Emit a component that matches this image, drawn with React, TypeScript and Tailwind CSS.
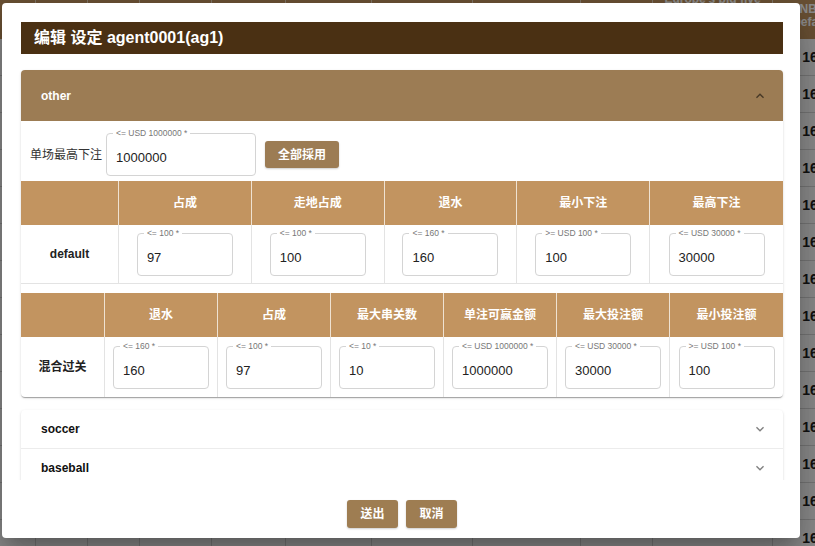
import React from "react";

const Chevron = ({ className }: { className?: string }) => (
  <svg viewBox="0 0 24 24" className={className} fill="currentColor">
    <path d="M16.59 8.59 12 13.17 7.41 8.59 6 10l6 6 6-6z" />
  </svg>
);

function Field({ label, value, w }: { label: string; value: string; w: string }) {
  return (
    <div className={`relative h-[43px] rounded-[4px] border border-[#d4d4d4] bg-white ${w}`}>
      <span className="absolute left-[6px] -top-[6px] whitespace-nowrap bg-white px-[3px] text-[8.5px] leading-[10px] text-[#777]">
        {label}
      </span>
      <div className="pl-[9px] pt-[16px] text-[13px] leading-[15px] text-[#222]">{value}</div>
    </div>
  );
}

const bgColClasses = [
  "w-[36px]",
  "w-[52px]",
  "w-[52px]",
  "w-[72px]",
  "w-[74px]",
  "w-[86px]",
  "w-[101px]",
  "w-[108px]",
  "w-[72px]",
  "w-[120px]",
  "w-[80px]",
];

function Background() {
  const rows = Array.from({ length: 14 });
  return (
    <div className="flex flex-col">
      <div className="flex h-[39px] bg-[#c29460]">
        {bgColClasses.map((c, i) => (
          <div
            key={i}
            className={`${c} shrink-0 border-r border-[#e6d3bb] flex flex-col items-center justify-start text-[12px] leading-[13px] font-bold text-white text-center`}
          >
            {i === 9 ? <span className="-mt-[7px]">Europe's big five</span> : null}
            {i === 10 ? (
              <span className="mt-[3px] w-[60px]">NBA Default</span>
            ) : null}
          </div>
        ))}
      </div>
      {rows.map((_, r) => (
        <div key={r} className="flex h-[37px] bg-white border-b border-[#d8d8d8]">
          {bgColClasses.map((c, i) => (
            <div
              key={i}
              className={`${c} shrink-0 border-r border-[#d8d8d8] flex items-center justify-center text-[14px] font-bold text-[#222]`}
            >
              {i === 10 ? <span className="pl-[3px]">160</span> : ""}
            </div>
          ))}
        </div>
      ))}
    </div>
  );
}

const t1Heads = ["", "占成", "走地占成", "退水", "最小下注", "最高下注"];
const t1Fields: [string, string][] = [
  ["<= 100 *", "97"],
  ["<= 100 *", "100"],
  ["<= 160 *", "160"],
  [">= USD 100 *", "100"],
  ["<= USD 30000 *", "30000"],
];
const t2Heads = ["", "退水", "占成", "最大串关数", "单注可赢金额", "最大投注额", "最小投注额"];
const t2Fields: [string, string][] = [
  ["<= 160 *", "160"],
  ["<= 100 *", "97"],
  ["<= 10 *", "10"],
  ["<= USD 1000000 *", "1000000"],
  ["<= USD 30000 *", "30000"],
  [">= USD 100 *", "100"],
];

export default function App() {
  return (
    <div className="relative w-[815px] h-[546px] overflow-hidden bg-white font-['Liberation_Sans','Noto_Sans_CJK_SC',Arial,sans-serif]">
      <Background />
      <div className="absolute inset-0 bg-black/45" />

      {/* Modal */}
      <div className="absolute left-[2px] top-[3px] w-[798px] h-[535px] rounded-[4px] bg-white flex flex-col shadow-[0_11px_15px_-7px_rgba(0,0,0,0.2),0_24px_38px_3px_rgba(0,0,0,0.14),0_9px_46px_8px_rgba(0,0,0,0.12)]">
        <div className="mt-[19px] ml-[19px] mr-[17px] h-[32px] bg-[#4a3013] flex items-center pl-[13px] text-white text-[16px] font-bold">
          编辑 设定 agent0001(ag1)
        </div>

        <div className="h-[426px] overflow-hidden pt-[16px] pl-[19px] pr-[17px]">
          {/* other panel */}
          <div className="rounded-[4px] bg-white shadow-[0_2px_1px_-1px_rgba(0,0,0,0.2),0_1px_1px_0_rgba(0,0,0,0.14),0_1px_3px_0_rgba(0,0,0,0.12)]">
            <div className="h-[51px] rounded-t-[4px] bg-[#9c7c54] flex items-center justify-between pl-[20px] pr-[15px]">
              <span className="text-white font-bold text-[12px]">other</span>
              <Chevron className="w-[16px] h-[16px] rotate-180 text-black/55" />
            </div>
            <div className="flex items-center pt-[12px] pb-[5px] pl-[9px]">
              <span className="text-[12px] text-[#333] mr-[4px]">单场最高下注</span>
              <Field label="<= USD 1000000  *" value="1000000" w="w-[150px]" />
              <button className="ml-[9px] w-[74px] h-[27px] rounded-[3px] bg-[#9c7c54] text-white font-bold text-[12px] shadow-[0_1px_2px_rgba(0,0,0,0.2)]">
                全部採用
              </button>
            </div>

            {/* table 1 */}
            <div className="grid grid-cols-[98px_repeat(5,1fr)]">
              {t1Heads.map((h, i) => (
                <div
                  key={i}
                  className={`h-[44px] bg-[#c29460] flex items-center justify-center text-white font-bold text-[12px] ${i < 5 ? "border-r border-[#efe2d2]" : ""}`}
                >
                  {h}
                </div>
              ))}
              <div className="h-[59px] border-r border-b border-[#e3e3e3] flex items-center justify-center font-bold text-[12px] text-[#222]">
                default
              </div>
              {t1Fields.map(([l, v], i) => (
                <div
                  key={i}
                  className={`h-[59px] border-b border-[#e3e3e3] flex items-center justify-center ${i < 4 ? "border-r" : ""}`}
                >
                  <Field label={l} value={v} w="w-[96px]" />
                </div>
              ))}
            </div>

            <div className="h-[9px]" />

            {/* table 2 */}
            <div className="grid grid-cols-[84px_repeat(6,1fr)]">
              {t2Heads.map((h, i) => (
                <div
                  key={i}
                  className={`h-[44px] bg-[#c29460] flex items-center justify-center text-white font-bold text-[12px] ${i < 6 ? "border-r border-[#efe2d2]" : ""}`}
                >
                  {h}
                </div>
              ))}
              <div className="h-[60px] border-r border-[#e3e3e3] flex items-center justify-center font-bold text-[12px] text-[#222]">
                混合过关
              </div>
              {t2Fields.map(([l, v], i) => (
                <div
                  key={i}
                  className={`h-[60px] border-[#e3e3e3] flex items-center justify-center ${i < 5 ? "border-r" : ""}`}
                >
                  <Field label={l} value={v} w="w-[96px]" />
                </div>
              ))}
            </div>
          </div>

          {/* collapsed panels */}
          <div className="mt-[13px] rounded-t-[4px] bg-white shadow-[0_2px_1px_-1px_rgba(0,0,0,0.2),0_1px_1px_0_rgba(0,0,0,0.14),0_1px_3px_0_rgba(0,0,0,0.12)]">
            <div className="h-[38px] flex items-center justify-between pl-[20px] pr-[15px]">
              <span className="font-bold text-[12px] text-[#111]">soccer</span>
              <Chevron className="w-[16px] h-[16px] text-black/50" />
            </div>
            <div className="h-[38px] border-t border-[#ececec] flex items-center justify-between pl-[20px] pr-[15px]">
              <span className="font-bold text-[12px] text-[#111]">baseball</span>
              <Chevron className="w-[16px] h-[16px] text-black/50" />
            </div>
          </div>
        </div>

        <div className="flex justify-center gap-[8px] pt-[20px] pl-[2px]">
          <button className="w-[51px] h-[28px] rounded-[3px] bg-[#9e7d52] text-white font-bold text-[12px] shadow-[0_1px_2px_rgba(0,0,0,0.2)]">
            送出
          </button>
          <button className="w-[51px] h-[28px] rounded-[3px] bg-[#9e7d52] text-white font-bold text-[12px] shadow-[0_1px_2px_rgba(0,0,0,0.2)]">
            取消
          </button>
        </div>
      </div>
    </div>
  );
}
